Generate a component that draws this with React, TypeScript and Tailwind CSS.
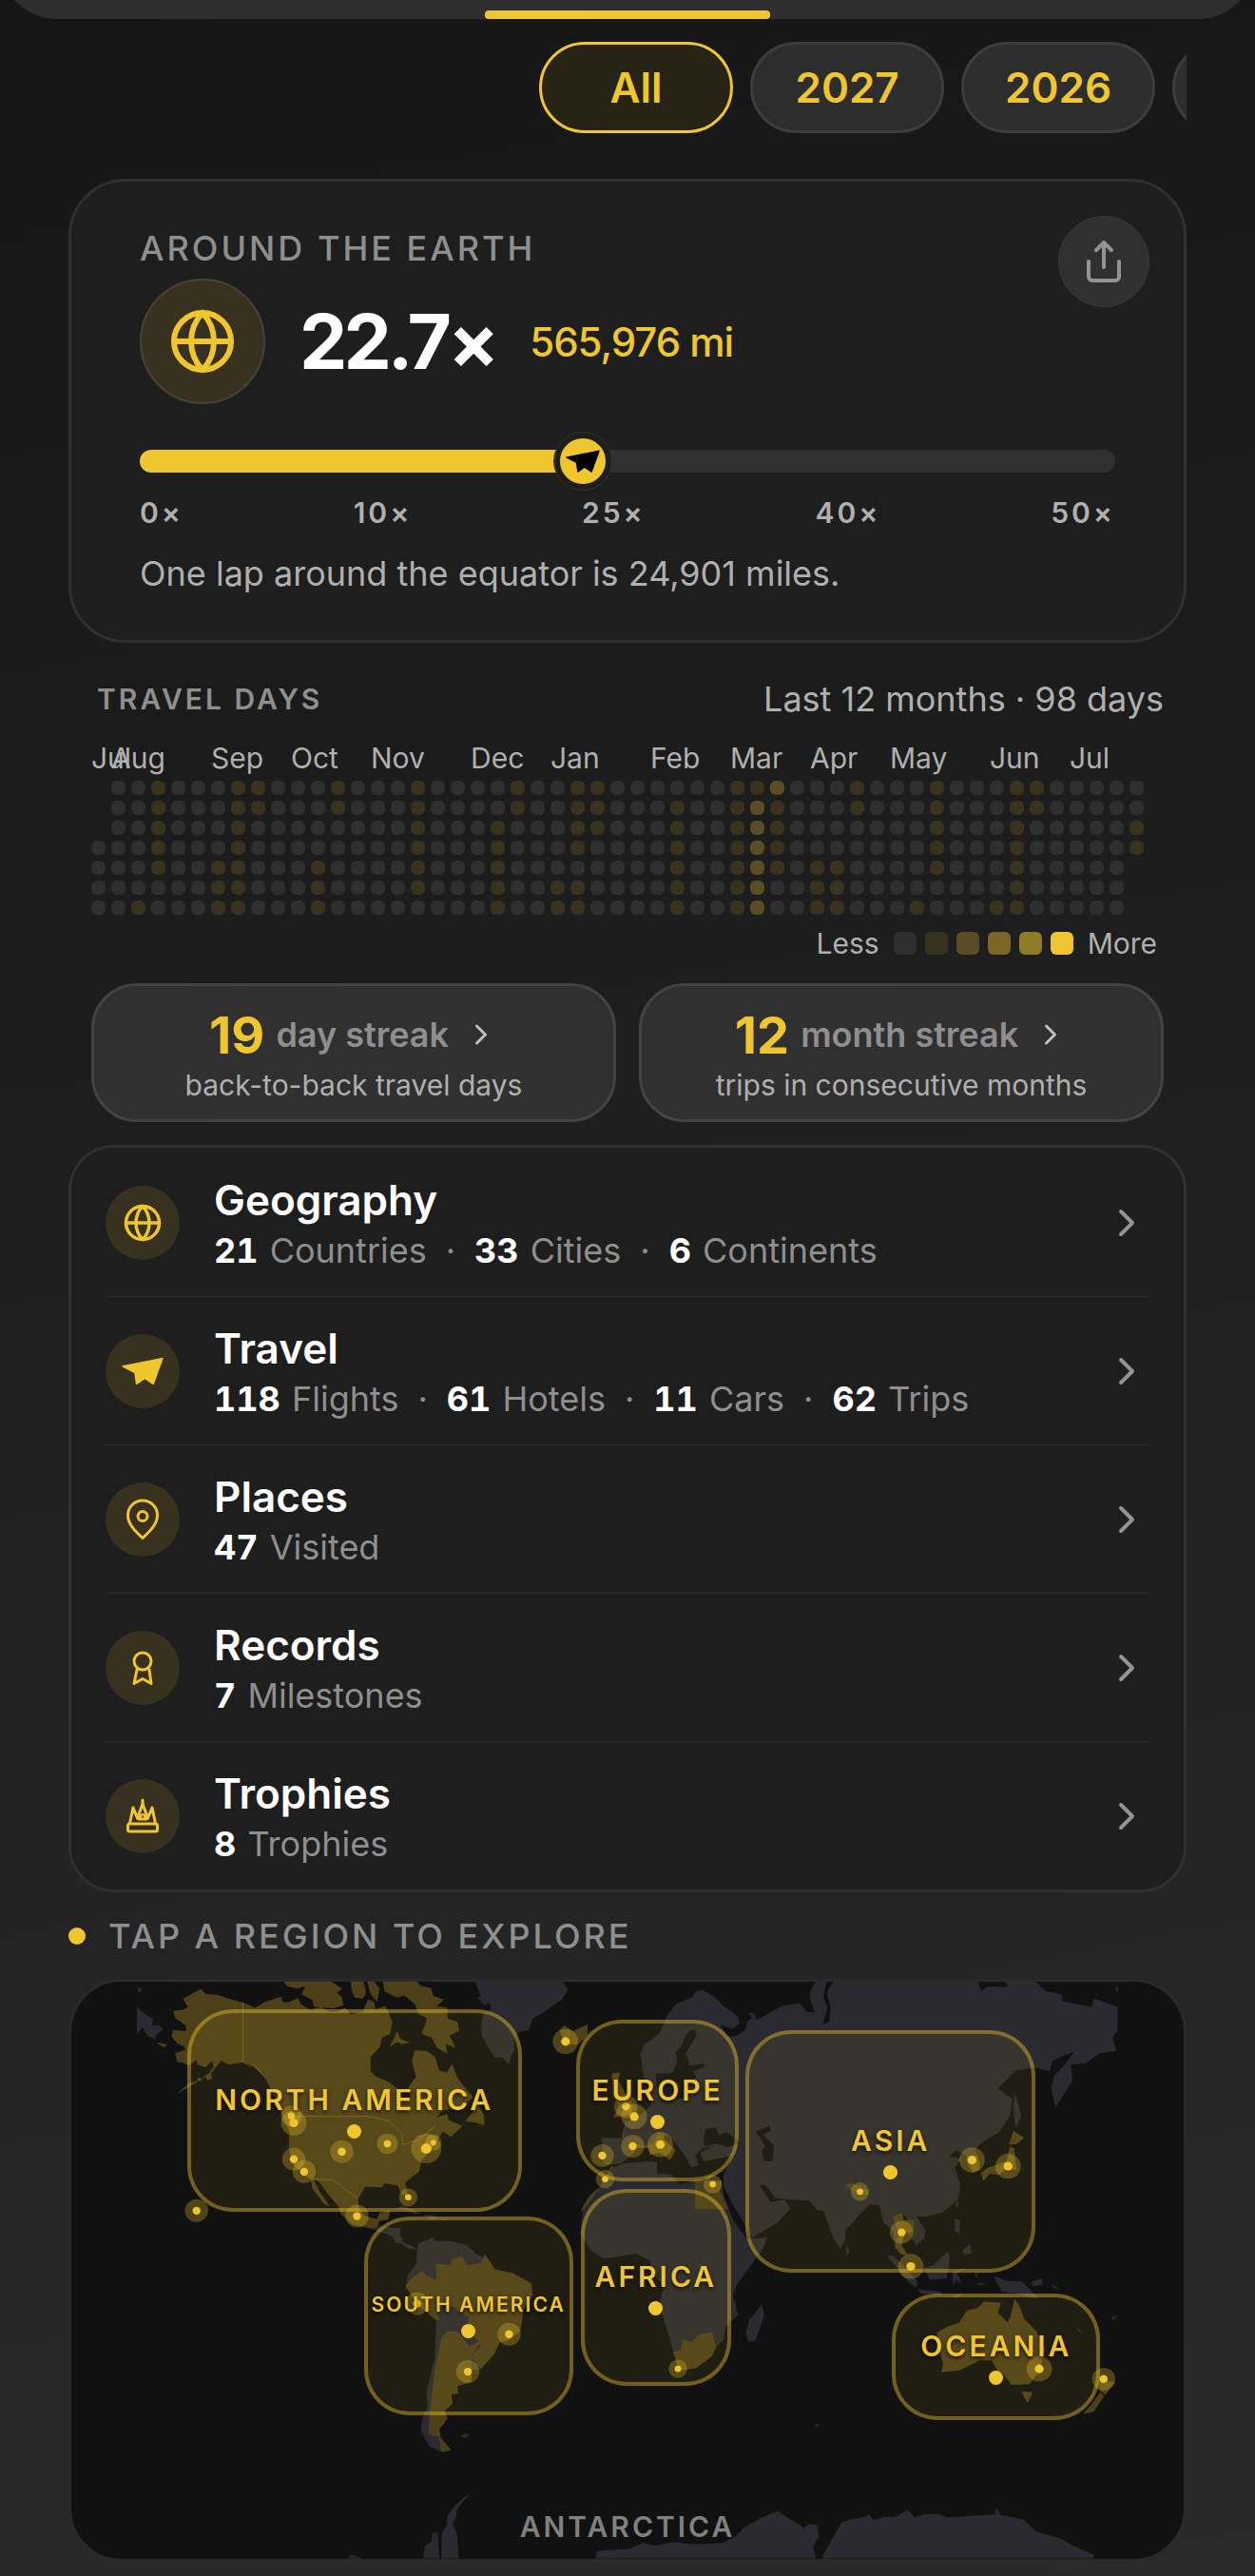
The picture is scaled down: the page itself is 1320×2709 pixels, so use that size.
import type { ComponentType, ReactNode } from 'react';
import clsx from 'clsx';
import { ChevronRight, Globe, Share } from 'lucide-react';

const YEARS = ['All', '2027', '2026', '2025'];

const MONTHS = [
  { label: 'Jul', column: 1 },
  { label: 'Aug', column: 2 },
  { label: 'Sep', column: 7 },
  { label: 'Oct', column: 11 },
  { label: 'Nov', column: 15 },
  { label: 'Dec', column: 20 },
  { label: 'Jan', column: 24 },
  { label: 'Feb', column: 29 },
  { label: 'Mar', column: 33 },
  { label: 'Apr', column: 37 },
  { label: 'May', column: 41 },
  { label: 'Jun', column: 46 },
  { label: 'Jul', column: 50 },
];

// One string per week, Sunday first. '-' is a day outside the range.
const QUIET_WEEK = '0000000';
const WEEKS: Record<number, string> = {
  0: '---0000',
  2: '0000001',
  3: '1111100',
  6: '0000111',
  7: '1111111',
  8: '1100000',
  11: '0000111',
  12: '1100000',
  16: '1111110',
  20: '0011111',
  21: '1100000',
  23: '0000011',
  24: '1111011',
  25: '1110000',
  29: '0111111',
  32: '1111111',
  33: '1222222',
  34: '2111100',
  36: '0000111',
  37: '0000111',
  38: '1100000',
  41: '0000001',
  42: '1111100',
  45: '0000001',
  46: '1111111',
  47: '1100000',
  52: '0011---',
};

const LEVELS = [
  'bg-[#2f2f2f]',
  'bg-[#39321e]',
  'bg-[#5a4c24]',
  'bg-[#7a6627]',
  'bg-[#8f7b27]',
  'bg-[#f0c62f]',
];

const CATEGORIES: {
  title: string;
  icon: ComponentType;
  stats: [number, string][];
}[] = [
  {
    title: 'Geography',
    icon: GlobeIcon,
    stats: [
      [21, 'Countries'],
      [33, 'Cities'],
      [6, 'Continents'],
    ],
  },
  {
    title: 'Travel',
    icon: PlaneIcon,
    stats: [
      [118, 'Flights'],
      [61, 'Hotels'],
      [11, 'Cars'],
      [62, 'Trips'],
    ],
  },
  { title: 'Places', icon: PinIcon, stats: [[47, 'Visited']] },
  { title: 'Records', icon: RibbonIcon, stats: [[7, 'Milestones']] },
  { title: 'Trophies', icon: CrownIcon, stats: [[8, 'Trophies']] },
];

const REGIONS = [
  { name: 'NORTH AMERICA', box: 'left-[10.4%] top-[4.8%] h-[35.1%] w-[30.1%]' },
  { name: 'SOUTH AMERICA', box: 'left-[26.3%] top-[40.7%] h-[34.4%] w-[18.8%]', small: true },
  { name: 'EUROPE', box: 'left-[45.4%] top-[6.6%] h-[28%] w-[14.6%]' },
  { name: 'AFRICA', box: 'left-[45.8%] top-[35.9%] h-[34.1%] w-[13.5%]' },
  { name: 'ASIA', box: 'left-[60.6%] top-[8.4%] h-[42%] w-[26.1%]' },
  { name: 'OCEANIA', box: 'left-[73.8%] top-[54%] h-[21.9%] w-[18.7%]' },
];

export default function App() {
  return (
    <div className="min-h-screen bg-linear-170 from-[#161616] to-[#2a2a2a] pb-4 font-[Inter,'Liberation_Sans',sans-serif] text-white">
      <header className="flex h-5 items-end overflow-hidden">
        <div className="flex h-[120px] w-full shrink-0 items-end justify-center rounded-b-[60px] bg-[#2e2e2e]">
          <div className="h-[9px] w-[300px] rounded-sm bg-[#f0c62f]" />
        </div>
      </header>

      <main className="px-[72px]">
        <YearFilter />
        <EarthCard />
        <TravelDays />
        <CategoryList />
        <RegionMap />
      </main>
    </div>
  );
}

function YearFilter() {
  return (
    <nav aria-label="Year" className="mt-6 flex gap-[18px] overflow-hidden pl-[42.1%]">
      {YEARS.map((year, i) => (
        <button
          key={year}
          type="button"
          aria-pressed={i === 0}
          className={clsx(
            'h-24 w-[204px] shrink-0 cursor-pointer rounded-full border-3 text-[44px] font-semibold text-[#f0c62f]',
            i === 0 ? 'border-[#f0c62f] bg-[#272416]' : 'border-[#3d3d3d] bg-[#2d2d2d]',
          )}
        >
          {year}
        </button>
      ))}
    </nav>
  );
}

function EarthCard() {
  return (
    <section className="relative mt-12 rounded-[60px] border-3 border-[#303030] bg-[#1e1e1e] px-[72px] pt-[50px] pb-12">
      <button
        type="button"
        aria-label="Share"
        className="absolute top-9 right-9 flex size-24 cursor-pointer items-center justify-center rounded-full border border-[#393939] bg-[#303030] text-[#939393]"
      >
        <Share size={48} strokeWidth={2} />
      </button>

      <h2 className="text-4xl font-medium tracking-[3px] text-[#8f8f8f]">AROUND THE EARTH</h2>
      <div className="mt-3 flex items-center">
        <div className="flex size-[132px] items-center justify-center rounded-full border-2 border-[#474335] bg-[#383120] text-[#f0c62f]">
          <Globe size={72} strokeWidth={2} />
        </div>
        <p className="ml-9 text-[80px] leading-none font-bold tracking-tighter">22.7×</p>
        <p className="ml-9 text-[42px] font-medium tracking-tight text-[#f0c62f]">565,976 mi</p>
      </div>

      <div
        role="progressbar"
        aria-label="Laps around the Earth"
        aria-valuemin={0}
        aria-valuemax={50}
        aria-valuenow={22.7}
        className="mt-12 flex h-6 items-center rounded-full bg-[#303030]"
      >
        <div className="h-6 w-[45.4%] rounded-l-full bg-[#f0c62f]" />
        <div className="-ml-[30px] flex size-[60px] items-center justify-center rounded-full border-6 border-[#1e1e1e] bg-[#f0c62f] text-black outline outline-[#39321e]">
          <svg viewBox="85 112 130 88" className="w-9" fill="currentColor" aria-hidden="true">
            <path d={PLANE} />
          </svg>
        </div>
      </div>
      <div className="mt-[26px] flex justify-between text-[30px] leading-8 font-semibold tracking-widest text-[#b0b0b0]">
        <span>0×</span>
        <span>10×</span>
        <span>25×</span>
        <span>40×</span>
        <span>50×</span>
      </div>
      <p className="mt-7 mb-0.5 text-4xl text-[#b0b0b0]">
        One lap around the equator is 24,901 miles.
      </p>
    </section>
  );
}

function TravelDays() {
  const days = Array.from({ length: 53 }, (_, week) => [...(WEEKS[week] ?? QUIET_WEEK)]).flat();

  return (
    <section className="mt-[39px] px-6">
      <div className="flex h-10 items-center justify-between pl-1.5">
        <h2 className="text-[30px] font-semibold tracking-widest text-[#8f8f8f]">TRAVEL DAYS</h2>
        <p className="text-4xl text-[#b0b0b0]">Last 12 months · 98 days</p>
      </div>

      <div className="mt-6 grid grid-cols-[repeat(53,minmax(0,1fr))] gap-x-1.5 pr-[21px] text-[30px] leading-9 text-[#b0b0b0]">
        {MONTHS.map(({ label, column }) => (
          <span key={column} className="row-start-1" style={{ gridColumnStart: column }}>
            {label}
          </span>
        ))}
      </div>
      <div
        role="img"
        aria-label="Travel days per week"
        className="mt-1.5 grid auto-cols-fr grid-flow-col grid-rows-7 gap-1.5 pr-[21px]"
      >
        {days.map((day, i) => (
          <span
            key={i}
            className={clsx('aspect-square rounded-md', day !== '-' && LEVELS[Number(day)])}
          />
        ))}
      </div>

      <div className="mt-3 flex items-center justify-end gap-[9px] pr-[7px] text-[30px] leading-9 text-[#b0b0b0]">
        <span className="mr-1.5">Less</span>
        {LEVELS.map((level) => (
          <span key={level} className={clsx('size-6 rounded-md', level)} />
        ))}
        <span className="ml-1.5">More</span>
      </div>

      <div className="mt-6 grid grid-cols-2 gap-6">
        <Streak count={19} label="day streak" note="back-to-back travel days" />
        <Streak count={12} label="month streak" note="trips in consecutive months" />
      </div>
    </section>
  );
}

function Streak({ count, label, note }: { count: number; label: string; note: string }) {
  return (
    <button
      type="button"
      className="flex h-[146px] cursor-pointer flex-col items-center justify-center rounded-[48px] border-3 border-[#434343] bg-[#303030] pt-2"
    >
      <span className="flex h-[60px] items-center">
        <span className="text-[54px] font-bold text-[#f0c62f]">{count}</span>
        <span className="ml-3 text-4xl font-semibold text-[#8f8f8f]">{label}</span>
        <ChevronRight size={36} strokeWidth={2} className="ml-4 text-[#c0c0c0]" />
      </span>
      <span className="text-[30px] leading-[46px] text-[#b0b0b0]">{note}</span>
    </button>
  );
}

function CategoryList() {
  return (
    <ul className="mt-6 rounded-[48px] border-3 border-[#303030] bg-[#1e1e1e] px-9 pt-px">
      {CATEGORIES.map(({ title, icon: Icon, stats }) => (
        <li key={title} className="border-[#303030] not-last:border-b">
          <a href={`#${title.toLowerCase()}`} className="flex h-[155px] items-center">
            <span className="flex size-[78px] items-center justify-center rounded-full bg-[#383120] text-[#f0c62f]">
              <Icon />
            </span>
            <span className="ml-9 flex-1 pt-0.5">
              <span className="block text-[44px] leading-[56px] font-semibold">{title}</span>
              <span className="block text-4xl leading-[50px] text-[#8f8f8f]">
                {stats.map(([value, unit], i) => (
                  <span key={unit}>
                    {i > 0 && <span className="mx-5">·</span>}
                    <b className="mr-0.5 font-bold text-white tabular-nums">{value}</b> {unit}
                  </span>
                ))}
              </span>
            </span>
            <ChevronRight size={48} strokeWidth={2} className="text-[#939393]" />
          </a>
        </li>
      ))}
    </ul>
  );
}

function RegionMap() {
  return (
    <section className="mt-[26px]">
      <h2 className="flex items-center gap-6 text-4xl font-medium tracking-[3px] text-[#8f8f8f]">
        <span className="size-[18px] rounded-full bg-[#f0c62f]" />
        TAP A REGION TO EXPLORE
      </h2>
      <div className="mt-[25px] overflow-hidden rounded-[56px] border-3 border-[#2a2a2a] bg-[#111111]">
        <div className="relative aspect-[1170/607]">
          <WorldMap />
          {REGIONS.map(({ name, box, small }) => (
            <button
              key={name}
              type="button"
              className={clsx(
                'absolute flex cursor-pointer flex-col items-center justify-center gap-2 rounded-[48px] border-4 border-[#f0c62f]/40 bg-[#f0c62f]/7 font-semibold tracking-widest whitespace-nowrap text-[#f0c62f] text-shadow-[0_2px_4px_#000000cc]',
                box,
                small ? 'text-[21px] leading-6' : 'text-[30px] leading-9',
              )}
            >
              {name}
              <span className="size-[15px] rounded-full bg-[#f0c62f]" />
            </button>
          ))}
          <button
            type="button"
            className="absolute inset-x-0 bottom-4 mx-auto w-60 cursor-pointer text-[30px] leading-9 font-semibold tracking-widest text-[#808080]"
          >
            ANTARCTICA
          </button>
        </div>
      </div>
    </section>
  );
}

// x, y, radius of the dot
const PINS = [
  [586, 399, 9],
  [592, 417, 11],
  [592, 509, 10],
  [618, 541, 10],
  [712, 490, 10],
  [826, 470, 9],
  [923, 482, 13],
  [941, 467, 7],
  [878, 606, 8],
  [750, 654, 10],
  [349, 640, 10],
  [1271, 210, 11],
  [900, 876, 10],
  [1130, 954, 10],
  [1027, 1049, 10],
  [1422, 375, 10],
  [1443, 401, 11],
  [1439, 476, 10],
  [1508, 472, 11],
  [1363, 500, 10],
  [1370, 560, 8],
  [1552, 1042, 8],
  [1639, 573, 8],
  [2287, 511, 11],
  [2377, 527, 11],
  [2007, 592, 8],
  [2111, 695, 10],
  [2134, 782, 11],
  [2455, 1042, 11],
  [2616, 1068, 10],
];

function WorldMap() {
  return (
    <svg
      viewBox="36 58 2780 1467"
      preserveAspectRatio="none"
      className="absolute inset-0 size-full"
      aria-hidden="true"
    >
      {/* western half */}
      <g fill="#2b2a30">
        <path d="M1045 58 1055 85 1060 92 1052 100 1068 118 1082 112 1085 128 1066 138 1060 165 1062 195 1078 225 1096 252 1112 250 1130 268 1136 245 1142 235 1144 205 1152 188 1180 180 1190 150 1215 138 1240 118 1262 105 1270 90 1278 80 1265 58Z" />
        <path d="M200 122 222 142 240 152 238 170 255 168 266 180 248 192 246 204 226 196 214 172 200 192ZM200 70 215 78 204 86Z" />
        <path d="M838 638 862 628 888 636 912 648 890 648 868 636ZM915 652 935 650 955 658 935 664ZM965 658 980 660 968 664ZM890 658 902 660 895 664Z" />
        <path d="M785 685 802 678 830 682 858 684 858 704 868 722 886 728 900 738 880 738 862 724 846 722 840 708 822 698 806 694Z" />
        <path d="M900 738 905 722 922 716 940 707 946 718 982 717 1002 722 1025 728 1048 750 1078 765 1095 790 1140 800 1185 825 1188 855 1165 890 1158 945 1130 968 1105 975 1092 1005 1060 1042 1035 1046 1035 1075 1000 1085 1002 1104 985 1106 988 1130 968 1150 976 1168 955 1195 958 1214 984 1248 962 1254 930 1238 910 1200 912 1172 926 1140 924 1100 945 1010 948 920 905 882 872 832 876 805 898 775Z" />
        <path d="M1010 1212 1020 1206 1032 1210 1018 1218Z" />
        <path d="M1034 1362 1018 1376 1000 1398 998 1416 990 1436 1000 1462 1004 1524 960 1524 962 1460 974 1440 975 1418 992 1392 1020 1366ZM915 1524 920 1492 936 1482 938 1460 952 1458 956 1524ZM728 1524 735 1515 765 1524Z" />
      </g>
      <g fill="#4d4019" stroke="#66561c">
        <path d="M303 341 330 318 356 308 372 298 382 290 392 275 388 258 372 275 352 268 350 256 328 270 312 262 302 262 296 240 322 232 318 222 302 215 288 198 290 182 324 184 322 168 296 150 292 133 318 130 328 122 316 102 340 88 360 77 372 90 400 92 436 104 465 112 495 125 520 110 560 97 562 110 578 112 602 100 608 115 632 130 660 138 700 135 720 125 735 142 765 135 778 104 792 110 796 130 820 120 838 160 832 190 812 200 806 224 783 250 783 285 798 300 826 312 850 330 864 352 868 365 885 350 880 325 898 300 888 260 895 233 925 235 945 250 955 285 975 290 987 268 1000 302 1025 335 1040 352 1010 375 965 385 945 405 975 395 978 410 1012 425 985 452 965 438 948 462 930 490 910 512 905 540 870 568 876 600 862 598 852 575 820 570 812 580 770 578 752 610 755 640 772 655 800 662 808 645 832 640 828 662 806 665 800 680 785 684 740 675 710 648 705 630 680 600 655 565 640 560 655 590 680 628 668 622 640 585 635 560 620 550 590 520 580 480 582 440 560 390 545 350 520 300 490 272 465 262 430 268 410 258 385 290 350 312Z" />
        <path d="M568 58 575 68 600 75 622 68 612 90 640 105 642 120 690 125 715 118 712 98 698 85 712 76 685 58ZM735 58 738 82 745 98 765 100 772 85 766 58ZM776 58 785 90 800 108 806 75 792 58ZM815 58 820 82 850 98 868 92 895 115 905 140 925 150 922 165 912 190 938 200 950 225 975 240 970 215 995 225 980 195 1005 182 1000 160 976 152 975 125 948 120 966 104 940 95 935 75 910 70 900 58Z" />
        <path d="M833 222 842 205 850 185 858 204 880 212 862 216 850 210ZM1040 390 1052 358 1056 378 1066 395 1068 422 1045 415 1022 412ZM640 128 660 122 680 135 655 140ZM372 298 384 292 388 304 376 308ZM252 214 275 218 268 224ZM350 306 358 302 360 312Z" />
        <path d="M930 830 950 815 948 775 985 780 988 765 1012 757 1025 780 1060 775 1070 752 1095 790 1140 800 1185 825 1188 855 1165 890 1158 945 1130 968 1105 975 1092 1005 1060 1040 1035 1012 1060 985 1052 970 1030 945 1030 910 985 880 945 880 922 845Z" />
        <path d="M872 832 888 812 912 795 925 808 950 818 924 845 945 880 955 920 905 882Z" />
        <path d="M962 965 975 948 1000 948 1030 985 1055 975 1035 1010 1035 1075 1000 1085 1002 1104 985 1106 988 1130 968 1150 976 1168 955 1195 958 1214 930 1208 932 1160 945 1050ZM956 1216 984 1248 962 1252Z" />
        <path d="M1256 182 1268 170 1290 184 1325 168 1326 194 1302 217 1272 216Z" />
        <path d="M1388 292 1406 290 1402 308 1414 332 1438 372 1436 394 1392 402 1406 372 1390 352ZM1418 430 1445 405 1474 432 1480 455 1478 480 1440 480 1410 465ZM1364 456 1412 462 1446 486 1412 518 1372 522ZM1472 436 1500 428 1520 442 1516 458 1546 486 1532 510 1505 492 1482 498Z" />
        <path d="M1310 640 1330 604 1362 575 1386 528 1414 535 1418 556 1372 582 1345 625Z" />
      </g>
      <path
        d="M465 112V262L484 274 492 268 520 302 M600 400H778L830 412 862 445 864 472 900 462 945 425 M640 560 690 562 726 590 752 610"
        fill="none"
        stroke="#f0c62f"
        strokeOpacity={0.3}
        strokeWidth={2}
      />

      {/* eastern half */}
      <g transform="translate(1426 0)">
        <g fill="#2b2a30">
          <path d="M33 245 40 220 80 190 96 150 120 115 160 98 172 82 190 80 215 95 240 120 275 145 280 165 262 178 232 168 250 198 272 196 296 180 298 160 312 150 300 135 318 140 322 156 350 140 385 120 430 112 448 134 468 136 455 100 458 80 470 58 496 58 490 100 500 125 488 168 504 160 508 125 498 85 515 58 875 58 885 82 900 70 950 72 945 58 1020 58 1045 82 1085 90 1088 108 1160 122 1165 100 1225 122 1225 180 1212 200 1222 234 1180 240 1145 265 1108 268 1112 310 1070 378 1058 330 1068 295 1090 272 1118 235 1080 250 1062 260 1055 286 1018 276 970 284 945 310 925 330 962 355 955 400 930 440 888 465 868 485 882 522 865 540 850 525 845 500 822 486 804 502 835 508 818 530 832 575 826 612 785 645 745 655 722 655 745 690 740 712 722 728 698 692 715 680 690 650 672 668 676 722 695 752 684 752 668 736 665 695 640 670 628 625 605 625 580 650 545 690 545 715 532 738 515 712 490 640 475 640 455 615 405 612 370 608 345 575 330 575 358 618 392 612 408 634 375 670 310 710 290 670 258 615 240 578 240 548 262 500 190 515 182 492 215 475 186 482 170 500 178 525 160 530 146 505 128 478 100 448 75 440 65 470 40 475 20 470 5 500 -15 518 -60 520 -65 455 -10 455 -10 430 -5 415 25 405 45 385 60 370 58 320 40 300Z" />
          <path d="M-40 532-12 520 60 514 74 518 74 545 110 550 130 572 172 562 235 565 240 600 265 665 298 712 348 708 340 735 272 830 264 858 277 905 245 935 240 970 222 985 210 1010 170 1040 130 1045 115 1000 95 930 80 880 90 830 62 800 55 765 20 750-60 762-90 742-118 700-112 640-85 605Z" />
          <path d="M336 878 342 905 320 970 302 974 296 950 304 918ZM968 340 978 372 984 400 970 430 964 380ZM650 755 666 755 725 820 722 836 702 822ZM725 840 785 846 782 856 732 850ZM740 785 762 780 800 744 806 760 798 812 756 816ZM812 795 845 785 824 800 836 826 822 815 814 830ZM818 662 832 664 828 700 818 690ZM836 742 856 722 860 748 842 752ZM916 805 945 818 985 820 1004 838 1028 864 970 850 935 846 922 822ZM818 625 828 612 826 632ZM545 725 556 742 547 752ZM870 790 876 812 868 804ZM870 824 900 826 880 830ZM1008 822 1036 812 1038 828 1014 832ZM1058 826 1080 840 1066 838ZM1118 932 1138 950 1128 946ZM1208 912 1226 906 1214 918ZM468 1182 480 1184 474 1190ZM1218 76 1226 70 1226 86ZM810 856 840 850 824 862Z" />
          <path d="M-80 1524-76 1505-40 1502 0 1500 40 1484 70 1492 110 1482 170 1488 240 1484 268 1470 292 1444 340 1418 375 1403 400 1420 420 1432 440 1446 455 1436 475 1440 478 1468 464 1495 470 1524ZM484 1524 520 1460 535 1432 560 1425 596 1418 602 1410 615 1426 640 1418 670 1418 700 1400 718 1420 740 1412 776 1410 800 1420 850 1416 918 1412 922 1395 934 1414 990 1425 1020 1455 1085 1475 1110 1490 1165 1514 1165 1524Z" />
        </g>
        {/* Baltic, Black Sea, Caspian */}
        <path
          fill="#111111"
          d="M158 180 145 195 138 215 120 238 124 262 112 290 70 292 74 330 84 356 104 362 145 352 150 318 172 300 164 286 190 276 194 266 156 272 146 240 172 195 170 182ZM190 458 196 432 222 428 228 448 248 440 282 468 250 478 222 470 192 476ZM320 438 355 424 358 436 340 448 366 474 362 515 342 514 335 488 345 478Z"
        />
        <g fill="#4d4019" stroke="#66561c">
          <path d="M170 562 235 565 230 588 250 635H170ZM115 1000 135 995 138 968 160 975 180 955 212 950 216 975 222 985 210 1010 170 1040 130 1045Z" />
          <path d="M545 575 560 570 602 590 600 600 568 592ZM665 655 685 648 690 665 715 665 715 690 692 698 684 728 700 752 686 750 670 732 678 700ZM850 508 875 500 880 535 862 542ZM884 545 900 532 920 525 948 515 956 478 966 482 968 512 972 535 945 535 928 548 905 545 890 563ZM954 472 965 438 990 455 972 470Z" />
          <path d="M775 950 800 935 830 925 848 895 875 888 890 872 932 875 925 900 950 925 958 910 968 865 980 885 990 915 1020 945 1042 990 1030 1045 1005 1080 960 1082 940 1055 925 1045 910 1020 880 1020 830 1045 785 1050 790 1030 775 980ZM985 1100 1012 1102 1000 1128ZM1180 1062 1190 1056 1196 1074 1216 1076 1194 1108 1180 1096ZM1182 1102 1190 1112 1165 1150 1140 1156 1160 1132Z" />
        </g>
      </g>

      {PINS.map(([x, y, r]) => (
        <g key={`${x}-${y}`} fill="#f0c62f">
          <circle cx={x} cy={y} r={r * 2.9} fillOpacity={0.28} />
          <circle cx={x} cy={y} r={r} />
        </g>
      ))}
    </svg>
  );
}

const PLANE =
  'M86 139 212 114q2 0 2 3L185 197q-1 3-3 1L157 181 132 198q-3 1-3-2L124 162 87 143q-2-2-1-4Z';

function GlobeIcon() {
  return <Globe size={42} strokeWidth={2} />;
}

function PlaneIcon() {
  return (
    <svg viewBox="85 112 130 88" className="w-11" fill="currentColor" aria-hidden="true">
      <path d={PLANE} />
    </svg>
  );
}

function LineIcon({ children }: { children: ReactNode }) {
  return (
    <svg
      viewBox="0 0 48 48"
      className="size-12"
      fill="none"
      stroke="currentColor"
      strokeWidth={3}
      strokeLinecap="round"
      strokeLinejoin="round"
      aria-hidden="true"
    >
      {children}
    </svg>
  );
}

function PinIcon() {
  return (
    <LineIcon>
      <path d="M24 43.5C18 38 8.500 29.500 8.500 19.500A15.500 15.500 0 0 1 39.500 19.500C39.500 29.500 30 38 24 43.5Z" />
      <circle cx="24" cy="20.500" r="5" />
    </LineIcon>
  );
}

function RibbonIcon() {
  return (
    <LineIcon>
      <circle cx="24" cy="17" r="9" />
      <path d="M18 26 15 40.5 24 35.5 33 40.5 31 26" />
    </LineIcon>
  );
}

function CrownIcon() {
  return (
    <LineIcon>
      <rect x="8.500" y="32" width="31" height="8" rx="2" />
      <path d="M10.500 31.5 14 15 18.500 26 24 11 29.500 26 34 15 37.500 31.5" />
      <path d="M24 7V12M18.500 26 22 23.500M29.500 26 26 23.500M20 27H28" />
      <circle cx="24" cy="24.500" r="2.500" strokeWidth={2} />
    </LineIcon>
  );
}
